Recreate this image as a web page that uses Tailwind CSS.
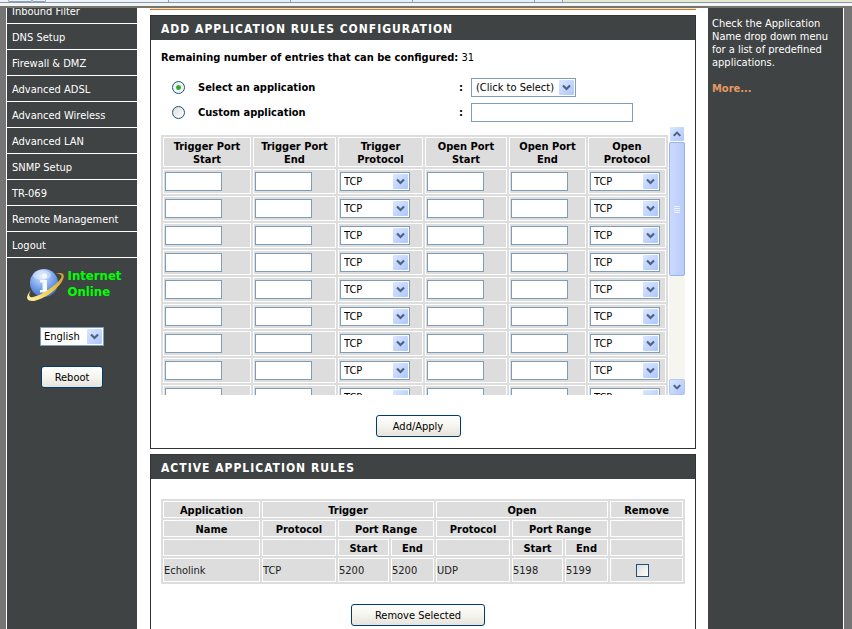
<!DOCTYPE html>
<html lang="en">
<head>
<meta charset="utf-8">
<title>Application Rules</title>
<meta name="viewport" content="width=device-width, initial-scale=1">
<script src="https://cdn.jsdelivr.net/npm/@tailwindcss/browser@4"></script>
</head>
<body class="flex h-screen flex-col overflow-hidden bg-[#757575] font-['DejaVu_Sans_Condensed','DejaVu_Sans',sans-serif] text-[11px] leading-[13px] text-black">

<!-- Browser toolbar edge -->
<header class="shrink-0 border-b-2 border-[#77766c] bg-[#f2f5f8]">
  <div class="flex h-[3px] border-b border-[#8d9aa6] bg-[#e6e9d3]">
    <div class="w-[8px] bg-[#eef3fa]"></div>
    <div class="w-[24px] rounded-b-sm border border-t-0 border-[#8ba0bb] bg-[#eaf2fc]"></div>
    <div class="w-[14px] rounded-b-sm border border-t-0 border-[#8ba0bb] bg-[#eaf2fc]"></div>
    <div class="w-[122px] bg-[#eef3fa]"></div>
    <div class="w-[122px] border-l border-[#8ba0bb] bg-[#e2eefb]"></div>
    <div class="w-[122px] border-l border-[#8ba0bb] bg-[#e2eefb]"></div>
    <div class="w-[122px] border-l border-[#8ba0bb] bg-[#e2eefb]"></div>
    <div class="w-[29px] border-x border-[#8ba0bb] bg-[#e2eefb]"></div>
  </div>
  <div class="h-[3px]"></div>
</header>

<div class="mr-2 ml-[6px] flex flex-1 overflow-hidden border-x border-white bg-white">

  <!-- Navigation -->
  <aside class="w-[130px] shrink-0 bg-[#404343] text-white">
    <nav class="-mt-[10px]">
      <ul>
        <li><a href="#" class="block border-b border-white px-[5px] pt-[7px] pb-[5px]">Inbound Filter</a></li>
        <li><a href="#" class="block border-b border-white px-[5px] pt-[7px] pb-[5px]">DNS Setup</a></li>
        <li><a href="#" class="block border-b border-white px-[5px] pt-[7px] pb-[5px]">Firewall &amp; DMZ</a></li>
        <li><a href="#" class="block border-b border-white px-[5px] pt-[7px] pb-[5px]">Advanced ADSL</a></li>
        <li><a href="#" class="block border-b border-white px-[5px] pt-[7px] pb-[5px]">Advanced Wireless</a></li>
        <li><a href="#" class="block border-b border-white px-[5px] pt-[7px] pb-[5px]">Advanced LAN</a></li>
        <li><a href="#" class="block border-b border-white px-[5px] pt-[7px] pb-[5px]">SNMP Setup</a></li>
        <li><a href="#" class="block border-b border-white px-[5px] pt-[7px] pb-[5px]">TR-069</a></li>
        <li><a href="#" class="block border-b border-white px-[5px] pt-[7px] pb-[5px]">Remote Management</a></li>
        <li><a href="#" class="block border-b border-white px-[5px] pt-[7px] pb-[5px]">Logout</a></li>
      </ul>
    </nav>
    <div class="mt-[10px] flex justify-center gap-1 pl-[3px]">
      <svg class="h-[36px] w-[38px]" viewBox="0 0 38 36" aria-hidden="true">
        <defs>
          <radialGradient id="globe" cx=".42" cy=".25" r=".8"><stop offset="0" stop-color="#dbe9ff"/><stop offset=".4" stop-color="#8fb5f2"/><stop offset=".8" stop-color="#5582d8"/><stop offset="1" stop-color="#3f69bf"/></radialGradient>
          <linearGradient id="ring" x1="0" y1="1" x2="1" y2="0"><stop offset="0" stop-color="#fff0a8"/><stop offset=".5" stop-color="#f1cd4c"/><stop offset="1" stop-color="#c79c2c"/></linearGradient>
        </defs>
        <circle cx="18" cy="15" r="14" fill="url(#globe)"/>
        <ellipse cx="16" cy="7" rx="9" ry="5" fill="#fff" opacity=".35"/>
        <circle cx="18.500" cy="8" r="2.600" fill="#f4f8ff"/>
        <path d="M14 12h7v10h2.500v2.500H14V22h2.500v-7.500H14z" fill="#f4f8ff"/>
        <path d="M30 6C35 4 39 5 37.500 10C35 19 18 32 7 33C0 33-1 29 5 22C2 27 3 30 7 29C17 27 33 15 35.500 9C36 6.500 34 6 30 6z" fill="url(#ring)"/>
      </svg>
      <p class="text-[13px] leading-4 font-bold text-[#00ff00]">Internet<br>Online</p>
    </div>
    <div class="mt-[23px] flex flex-col items-center gap-5">
      <div class="relative w-[64px]">
        <select aria-label="Language" class="block h-[19px] w-full appearance-none border border-[#7f9db9] bg-white pl-[3px] text-black"><option>English</option></select>
        <svg class="pointer-events-none absolute top-[2px] right-[2px] size-[15px] rounded-[1px] bg-linear-to-br from-[#dce7ff] to-[#adc6fb]" viewBox="0 0 15 15"><path d="M4 5.500l3.500 3.500L11 5.500" fill="none" stroke="#4d6185" stroke-width="2.200"/></svg>
      </div>
      <button class="h-[22px] w-[62px] rounded-[3px] border border-[#003c74] bg-linear-to-b from-white via-[#f5f4ef] to-[#e6e3da] text-black">Reboot</button>
    </div>
  </aside>

  <!-- Content -->
  <main class="min-w-0 flex-1 pr-3 pl-[13px]">
    <div class="mb-[5px] h-[2px] border-b border-[#d0762c] bg-[#fbe3cc]"></div>

    <section class="mb-[5px] border border-[#333]">
      <h2 class="bg-[#404343] px-[10px] pt-[7px] pb-[4px] text-[12px] leading-[13px] font-bold tracking-[1px] text-white">ADD APPLICATION RULES CONFIGURATION</h2>
      <div class="pt-[11px] pr-[10px] pb-[11px]">
        <div class="pl-[10px]">
          <p><b>Remaining number of entries that can be configured:</b> 31</p>
          <div class="mt-[11px] grid grid-cols-[37px_261px_auto] auto-rows-[25px] items-center justify-start">
            <input type="radio" name="mode" id="mode-select" checked class="ml-[11px] size-[13px] appearance-none rounded-full border border-[#1c5180] bg-[radial-gradient(circle,#21a121_0,#3fb53f_2px,#eef2ee_3px,#f6f8f4_6px)]">
            <label for="mode-select" class="font-bold">Select an application</label>
            <div class="flex items-center gap-2"><b>:</b>
              <div class="relative w-[105px]">
                <select aria-label="Application" class="block h-[19px] w-full appearance-none border border-[#7f9db9] bg-white pl-1"><option>(Click to Select)</option></select>
                <svg class="pointer-events-none absolute top-[2px] right-[2px] size-[15px] rounded-[1px] bg-linear-to-br from-[#dce7ff] to-[#adc6fb]" viewBox="0 0 15 15"><path d="M4 5.500l3.500 3.500L11 5.500" fill="none" stroke="#4d6185" stroke-width="2.200"/></svg>
              </div>
            </div>
            <input type="radio" name="mode" id="mode-custom" class="ml-[11px] size-[13px] appearance-none rounded-full border border-[#1c5180] bg-linear-to-br from-[#dcdcd7] to-white">
            <label for="mode-custom" class="font-bold">Custom application</label>
            <div class="flex items-center gap-2"><b>:</b>
              <input type="text" aria-label="Custom application name" class="h-[19px] w-[162px] border border-[#7f9db9] bg-white px-1">
            </div>
          </div>

          <div class="mt-px flex h-[269px]">
            <div class="flex-1 overflow-hidden pt-[9px] pr-px">
              <table class="w-full table-fixed border-separate border-spacing-[2px] bg-[#ddd]">
                <colgroup><col class="w-[88px]"><col class="w-[83px]"><col class="w-[85px]"><col class="w-[82px]"><col class="w-[77px]"><col class="w-[78px]"></colgroup>
                <thead>
                  <tr>
                    <th class="border border-white px-px pt-[2px]">Trigger Port<br>Start</th>
                    <th class="border border-white px-px pt-[2px]">Trigger Port<br>End</th>
                    <th class="border border-white px-px pt-[2px]">Trigger<br>Protocol</th>
                    <th class="border border-white px-px pt-[2px]">Open Port<br>Start</th>
                    <th class="border border-white px-px pt-[2px]">Open Port<br>End</th>
                    <th class="border border-white px-px pt-[2px]">Open<br>Protocol</th>
                  </tr>
                </thead>
                <tbody id="rules"></tbody>
              </table>
            </div>
            <div class="flex w-4 flex-col bg-[#f6f5ef]">
              <button aria-label="Scroll up" class="h-4 rounded-[2px] border border-white bg-linear-to-br from-[#dce7ff] to-[#adc6fb]"><svg class="size-[14px]" viewBox="0 0 15 15"><path d="M4 9.500L7.500 6L11 9.500" fill="none" stroke="#4d6185" stroke-width="2.200"/></svg></button>
              <div class="flex h-[134px] flex-col items-center justify-center gap-px rounded-[2px] border border-[#98b3ec] bg-linear-to-r from-[#cbdafe] to-[#b8ccfa]">
                <i class="h-px w-[6px] bg-[#eef4fe]"></i><i class="h-px w-[6px] bg-[#eef4fe]"></i><i class="h-px w-[6px] bg-[#eef4fe]"></i><i class="h-px w-[6px] bg-[#eef4fe]"></i>
              </div>
              <button aria-label="Scroll down" class="mt-auto h-4 rounded-[2px] border border-[#b4c8f4] bg-linear-to-br from-[#dce7ff] to-[#adc6fb]"><svg class="size-[14px]" viewBox="0 0 15 15"><path d="M4 5.500l3.500 3.500L11 5.500" fill="none" stroke="#4d6185" stroke-width="2.200"/></svg></button>
            </div>
          </div>
        </div>
        <div class="mt-5 flex justify-center">
          <button class="h-[22px] w-[85px] rounded-[3px] border border-[#003c74] bg-linear-to-b from-white via-[#f5f4ef] to-[#e6e3da]">Add/Apply</button>
        </div>
      </div>
    </section>

    <section class="border border-[#333]">
      <h2 class="bg-[#404343] px-[10px] pt-[7px] pb-[4px] text-[12px] leading-[13px] font-bold tracking-[1px] text-white">ACTIVE APPLICATION RULES</h2>
      <div class="pt-[20px] pr-[10px] pb-[11px]">
        <div class="pl-[10px]">
          <table class="w-full table-fixed border-separate border-spacing-[2px] bg-[#ddd]">
            <colgroup><col class="w-[97px]"><col class="w-[74px]"><col class="w-[51px]"><col class="w-[43px]"><col class="w-[74px]"><col class="w-[51px]"><col class="w-[43px]"><col class="w-[73px]"></colgroup>
            <thead>
              <tr class="h-[17px]">
                <th class="border border-white px-px pt-[2px]">Application</th>
                <th colspan="3" class="border border-white px-px pt-[2px]">Trigger</th>
                <th colspan="3" class="border border-white px-px pt-[2px]">Open</th>
                <th class="border border-white px-px pt-[2px]">Remove</th>
              </tr>
              <tr class="h-[17px]">
                <th class="border border-white px-px pt-[2px]">Name</th>
                <th class="border border-white px-px pt-[2px]">Protocol</th>
                <th colspan="2" class="border border-white px-px pt-[2px]">Port Range</th>
                <th class="border border-white px-px pt-[2px]">Protocol</th>
                <th colspan="2" class="border border-white px-px pt-[2px]">Port Range</th>
                <td class="border border-white p-px"></td>
              </tr>
              <tr class="h-[17px]">
                <td class="border border-white p-px"></td>
                <td class="border border-white p-px"></td>
                <th class="border border-white px-px pt-[2px]">Start</th>
                <th class="border border-white px-px pt-[2px]">End</th>
                <td class="border border-white p-px"></td>
                <th class="border border-white px-px pt-[2px]">Start</th>
                <th class="border border-white px-px pt-[2px]">End</th>
                <td class="border border-white p-px"></td>
              </tr>
            </thead>
            <tbody>
              <tr class="h-[24px] text-[#222]">
                <td class="border border-white py-px">Echolink</td>
                <td class="border border-white py-px">TCP</td>
                <td class="border border-white py-px">5200</td>
                <td class="border border-white py-px">5200</td>
                <td class="border border-white py-px">UDP</td>
                <td class="border border-white py-px">5198</td>
                <td class="border border-white py-px">5199</td>
                <td class="border border-white py-px pr-2"><input type="checkbox" aria-label="Remove Echolink" class="mx-auto block size-[13px] appearance-none border border-[#1c5180] bg-linear-to-br from-[#dcdcd7] to-white"></td>
              </tr>
            </tbody>
          </table>
        </div>
        <div class="mt-5 flex justify-center">
          <button class="h-[22px] w-[134px] rounded-[3px] border border-[#003c74] bg-linear-to-b from-white via-[#f5f4ef] to-[#e6e3da]">Remove Selected</button>
        </div>
      </div>
    </section>
  </main>

  <!-- Help -->
  <aside class="w-[135px] shrink-0 bg-[#404343] px-1 pt-[9px] text-white">
    <p>Check the Application Name drop down menu for a list of predefined applications.</p>
    <a href="#" class="mt-[13px] block font-bold text-[#e39a62]">More...</a>
  </aside>
</div>

<script>
  const port = (label) => `<td class="border border-white px-px py-[2px]"><input type="text" aria-label="${label}" class="block h-[19px] w-[57px] border border-[#7f9db9] bg-white px-1"></td>`;
  const protocol = (label) => `<td class="border border-white px-px py-[2px]"><div class="relative w-[70px]"><select aria-label="${label}" class="block h-[19px] w-full appearance-none border border-[#7f9db9] bg-white pl-[3px]"><option>TCP</option><option>UDP</option></select><svg class="pointer-events-none absolute top-[2px] right-[2px] size-[15px] rounded-[1px] bg-linear-to-br from-[#dce7ff] to-[#adc6fb]" viewBox="0 0 15 15"><path d="M4 5.500l3.500 3.500L11 5.500" fill="none" stroke="#4d6185" stroke-width="2.200"/></svg></div></td>`;
  document.getElementById('rules').innerHTML = Array.from({ length: 16 }, (_, i) => `<tr>
    ${port(`Trigger port start ${i + 1}`)}${port(`Trigger port end ${i + 1}`)}${protocol(`Trigger protocol ${i + 1}`)}
    ${port(`Open port start ${i + 1}`)}${port(`Open port end ${i + 1}`)}${protocol(`Open protocol ${i + 1}`)}</tr>`).join('');
</script>
</body>
</html>
